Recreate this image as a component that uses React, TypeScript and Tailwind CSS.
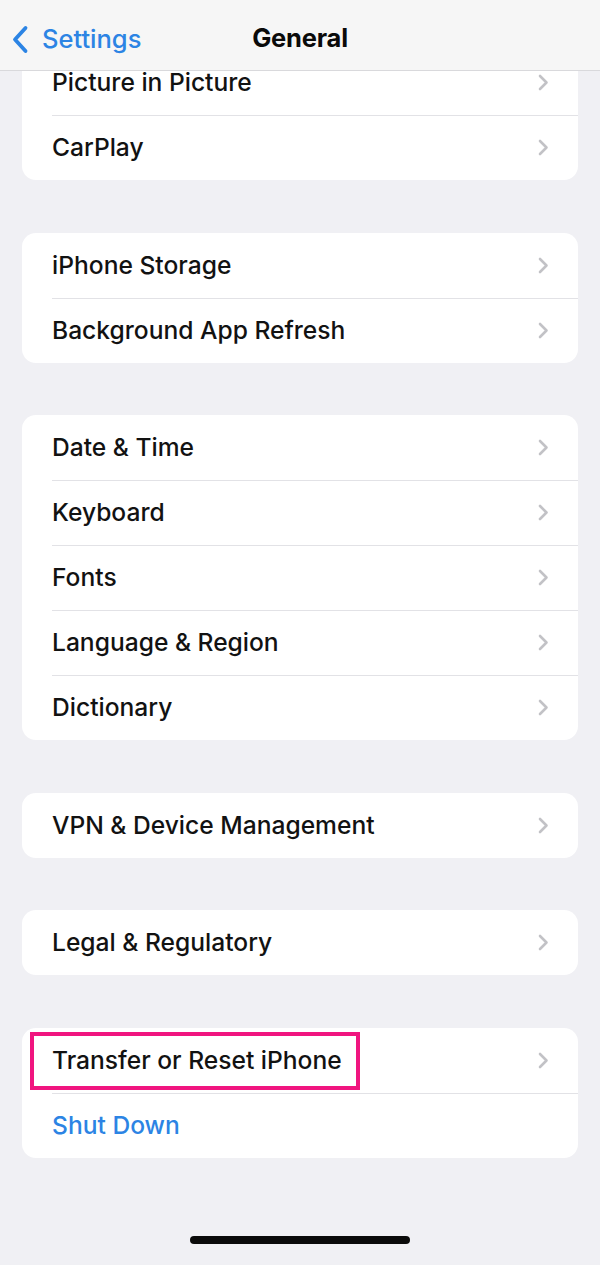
import React from "react";

const Chevron = () => (
  <svg width="12" height="17" viewBox="0 0 12 17" fill="none">
    <path d="M3 2l6.5 6.5L3 15" stroke="#c2c2c6" strokeWidth="2.6" strokeLinecap="round" strokeLinejoin="round" />
  </svg>
);

type Item = { label: string; blue?: boolean; highlight?: boolean };

const Row = ({ item, first }: { item: Item; first: boolean }) => (
  <div className="relative flex h-[65px] items-center pl-[30px]">
    {!first && <div className="absolute left-[30px] right-0 top-0 h-px bg-[#e2e2e6]" />}
    {item.highlight && (
      <div className="absolute left-[8px] top-[4px] h-[58px] w-[330px] border-[4px] border-[#f0157f]" />
    )}
    <span
      className={`flex-1 text-[24.6px] font-medium ${item.blue ? "text-[#2c84e4]" : "text-[#121212]"}`}
    >
      {item.label}
    </span>
    {!item.blue && (
      <div className="mr-[29px] flex items-center">
        <Chevron />
      </div>
    )}
  </div>
);

const Card = ({ items }: { items: Item[] }) => (
  <div className="overflow-hidden rounded-[14px] bg-white">
    {items.map((it, i) => (
      <Row key={it.label} item={it} first={i === 0} />
    ))}
  </div>
);

export default function App() {
  const groups: Item[][] = [
    [{ label: "Picture in Picture" }, { label: "CarPlay" }],
    [{ label: "iPhone Storage" }, { label: "Background App Refresh" }],
    [
      { label: "Date & Time" },
      { label: "Keyboard" },
      { label: "Fonts" },
      { label: "Language & Region" },
      { label: "Dictionary" },
    ],
    [{ label: "VPN & Device Management" }],
    [{ label: "Legal & Regulatory" }],
    [{ label: "Transfer or Reset iPhone", highlight: true }, { label: "Shut Down", blue: true }],
  ];
  return (
    <div
      className="relative h-[1265px] w-[600px] overflow-hidden bg-[#f0f0f4]"
      style={{ fontFamily: "Inter, 'Liberation Sans', sans-serif" }}
    >
      <div className="flex flex-col gap-[52.6px] px-[22px] pt-[50px]">
        {groups.map((g, i) => (
          <Card key={i} items={g} />
        ))}
      </div>

      <div className="absolute left-0 right-0 top-0 flex h-[71px] items-center justify-center border-b border-[#d9d9dc] bg-[#f5f5f5]/95">
        <div className="absolute left-[11px] top-0 flex h-[71px] items-center gap-[13px] pt-[7px]">
          <svg width="18" height="29" viewBox="0 0 18 29" fill="none">
            <path d="M14.5 3L4 14.5 14.5 26" stroke="#2c84e4" strokeWidth="3.8" strokeLinecap="round" strokeLinejoin="round" />
          </svg>
          <span className="text-[25.5px] font-medium text-[#2c84e4]">Settings</span>
        </div>
        <span className="pt-[7px] text-[25.5px] font-bold tracking-[-0.2px] text-[#0a0a0a]">General</span>
      </div>

      <div className="absolute bottom-[21px] left-[190px] h-[8px] w-[220px] rounded-full bg-[#0a0a0a]" />
    </div>
  );
}
